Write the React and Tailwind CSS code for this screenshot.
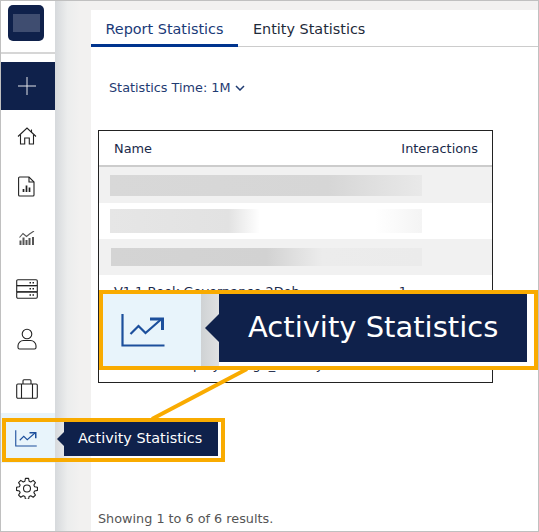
import React from "react";

const font = { fontFamily: '"DejaVu Sans", sans-serif' };

function TrendIcon({ className }) {
  return (
    <svg viewBox="0 0 44 33" fill="none" stroke="currentColor" strokeWidth="2.200" className={className}>
      <path d="M1.500 0v31.500h42" />
      <path d="M9.500 20l8-8 7 7 16-14" />
      <path d="M29 5h12.500v11" strokeWidth="3" />
    </svg>
  );
}

function HomeIcon() {
  return (
    <svg viewBox="0 0 20 18" fill="none" stroke="#222" strokeWidth="1.100" className="w-[20px] h-[18px]">
      <path d="M1 9.500L10 1l9 8.500" />
      <path d="M3.500 7.500v9.500h4.200v-6h4.600v6h4.200V7.500" />
      <path d="M14.500 2.500v3" />
    </svg>
  );
}

function DocIcon() {
  return (
    <svg viewBox="0 0 17 21" fill="none" stroke="#222" strokeWidth="1.100" className="w-[17px] h-[21px]">
      <path d="M1.600 1h9.400l5 5v13a1 1 0 0 1-1 1H1.600a1 1 0 0 1-1-1V2a1 1 0 0 1 1-1z" />
      <path d="M11 1v5h5" />
      <path d="M5.500 16v-3M8.500 16V9.500M11.500 16v-4.500" strokeWidth="1.700" />
    </svg>
  );
}

function ChartIcon() {
  return (
    <svg viewBox="0 0 16 14" fill="none" stroke="#555" className="w-[16px] h-[14px]">
      <path d="M0.500 6.500l3.500-4 3.500 3 3-2.500 4.500-3" strokeWidth="1.100" />
      <path d="M1.500 14V9.500M4.500 14V6.500M7.500 14V9M10.500 14V7M14 14V6" strokeWidth="2" />
    </svg>
  );
}

function ServerIcon() {
  return (
    <svg viewBox="0 0 22 20" fill="none" stroke="#222" strokeWidth="1.100" className="w-[22px] h-[20px]">
      <rect x="0.700" y="0.700" width="20.600" height="5.900" rx="1.200" />
      <rect x="0.700" y="6.600" width="20.600" height="6.300" />
      <rect x="0.700" y="12.900" width="20.600" height="6.300" rx="1.200" />
      <path d="M13.500 3.700h1.500M16.500 3.700h1.500M13.500 9.800h1.500M16.500 9.800h1.500M13.500 16h1.500M16.500 16h1.500" strokeWidth="1.500" />
    </svg>
  );
}

function UserIcon() {
  return (
    <svg viewBox="0 0 20 22" fill="none" stroke="#222" strokeWidth="1.100" className="w-[20px] h-[22px]">
      <circle cx="10" cy="6" r="4.800" />
      <path d="M6.500 12.500h7c3 0 5.500 2.300 5.500 5.300v1.700a1.500 1.500 0 0 1-1.500 1.500h-15a1.500 1.500 0 0 1-1.500-1.500v-1.700c0-3 2.500-5.300 5.500-5.300z" />
    </svg>
  );
}

function CaseIcon() {
  return (
    <svg viewBox="0 0 22 20" fill="none" stroke="#222" strokeWidth="1.100" className="w-[22px] h-[20px]">
      <rect x="0.700" y="5" width="20.600" height="14.300" rx="1.200" />
      <path d="M7 5V1.700a1 1 0 0 1 1-1h6a1 1 0 0 1 1 1V5" />
      <path d="M5.500 5v14.300M16.500 5v14.300" />
    </svg>
  );
}

function GearIcon() {
  return (
    <svg viewBox="0 0 24 24" fill="none" stroke="#222" strokeWidth="1.200" className="w-[22px] h-[22px]">
      <path d="M10.300 1.500h3.400l.6 3.100 1.800.8 2.700-1.700 2.400 2.400-1.700 2.700.8 1.800 3.100.6v3.400l-3.100.6-.8 1.800 1.700 2.700-2.400 2.400-2.700-1.700-1.800.8-.6 3.100h-3.400l-.6-3.100-1.800-.8-2.700 1.700-2.400-2.400 1.700-2.700-.8-1.800-3.100-.6v-3.400l3.100-.6.8-1.800-1.700-2.700 2.400-2.400 2.700 1.700 1.800-.8z" strokeLinejoin="round" />
      <circle cx="12" cy="12.600" r="3.800" />
    </svg>
  );
}

function Sidebar() {
  return (
    <div className="w-[54px] shrink-0 bg-white flex flex-col">
      <div className="h-[47px] border-b-2 border-[#d6d6d6] pt-[4px] pl-[7px] box-content">
        <div className="w-[36px] h-[36px] rounded-[5px] bg-[#0f214b] flex items-center justify-center">
          <div className="w-[27px] h-[18px] bg-[#3f4d70]" />
        </div>
      </div>
      <div className="mt-[8px] h-[48px] bg-[#0f214b] flex items-center justify-center pr-[2px]">
        <svg viewBox="0 0 18 18" stroke="#e3e5ea" strokeWidth="1" className="w-[18px] h-[18px]">
          <path d="M9 0v18M0 9h18" />
        </svg>
      </div>
      <div className="h-[51px] flex items-center justify-center pr-[3px]"><HomeIcon /></div>
      <div className="h-[51px] flex items-center justify-center pr-[3px]"><DocIcon /></div>
      <div className="h-[51px] flex items-center justify-center pr-[3px]"><ChartIcon /></div>
      <div className="h-[51px] flex items-center justify-center pr-[3px]"><ServerIcon /></div>
      <div className="h-[50px] flex items-center justify-center pr-[3px]"><UserIcon /></div>
      <div className="h-[49px] flex items-center justify-center pr-[3px]"><CaseIcon /></div>
      <div className="h-[50px] bg-[#e8f4fb] flex items-center justify-center pr-[5px] text-[#1c4f9c]">
        <TrendIcon className="w-[22px] h-[17px]" />
      </div>
      <div className="h-[50px] flex items-center justify-center pr-[3px]"><GearIcon /></div>
    </div>
  );
}

function Table() {
  return (
    <div className="ml-[7px] mt-[32px] w-[395px] h-[253px] border border-[#222] text-[12.900px] text-[#1a2a4a] overflow-hidden">
      <div className="h-[32px] pt-[2px] border-b-2 border-[#cccccc] flex items-center justify-between pl-[15px] pr-[14px] box-content">
        <span>Name</span>
        <span>Interactions</span>
      </div>
      <div className="h-[36px] bg-[#f1f1f1] flex items-center pl-[11px]">
        <div className="w-[312px] h-[21px] bg-gradient-to-r from-[#d8d8d8] via-[#d6d6d6] via-70% to-[#e9e9e9]" />
      </div>
      <div className="h-[36px] bg-white flex items-center pl-[11px]">
        <div className="w-[312px] h-[24px] bg-[linear-gradient(90deg,#e6e6e6_0%,#e2e2e2_38%,#ffffff_48%,#ffffff_85%,#f4f4f4_100%)]" />
      </div>
      <div className="h-[36px] bg-[#f1f1f1] flex items-center pl-[12px]">
        <div className="w-[311px] h-[18px] bg-[linear-gradient(90deg,#d4d4d4_0%,#d2d2d2_50%,#ececec_68%,#ebebeb_100%)]" />
      </div>
      <div className="h-[36px] flex items-center justify-between pl-[15px] pr-[85px] pb-[2px]">
        <span>V1.1 Book Governance 2Deb</span>
        <span>1</span>
      </div>
      <div className="h-[36px]" />
      <div className="h-[36px] flex items-center pl-[15px]">
        <span>V1.1 Set Display Design_Activity</span>
      </div>
    </div>
  );
}

function Main() {
  return (
    <div className="flex-1 min-w-0 mt-[9px] bg-white flex flex-col">
      <div className="h-[36px] border-b border-[#cccccc] box-content flex text-[14.400px] leading-[38px]">
        <div className="w-[147px] h-[37px] border-b-[3px] border-[#00348e] text-[#1a3a78] text-center">
          Report Statistics
        </div>
        <div className="pl-[15px] text-[#1e2a3a]">Entity Statistics</div>
      </div>
      <div className="mt-[31px] ml-[18px] h-[20px] flex items-center gap-[5px] text-[12.800px] text-[#1f3b72]">
        <span>Statistics Time: 1M</span>
        <svg viewBox="0 0 10 6" fill="none" stroke="#1f3b72" strokeWidth="1.500" className="w-[10px] h-[6px]">
          <path d="M1 1l4 4 4-4" />
        </svg>
      </div>
      <Table />
      <div className="mt-[126px] ml-[7px] text-[12.800px] text-[#555]">Showing 1 to 6 of 6 results.</div>
    </div>
  );
}

export default function App() {
  return (
    <div style={font} className="relative w-[539px] h-[532px] border border-[#c0c0c0] bg-[#f2f1f0] flex overflow-hidden">
      <Sidebar />
      <div className="w-[36px] shrink-0 bg-[linear-gradient(90deg,#d6d9dc_0%,#eceded_35%,#f2f1f0_70%)]" />
      <Main />

      {/* callout line between the small and the big highlight */}
      <svg className="absolute left-[0px] top-[0px] w-[539px] h-[532px] pointer-events-none" fill="none" stroke="#f9ab00" strokeWidth="4">
        <path d="M246 368L151 418" />
      </svg>

      {/* big highlight */}
      <div className="absolute left-[98px] top-[289px] w-[439px] h-[80px] border-4 border-[#f9ab00] bg-white flex">
        <div className="w-[98px] bg-[#e8f4fb] flex items-center pl-[18px] text-[#1c4f9c]">
          <TrendIcon className="w-[44px] h-[33px]" />
        </div>
        <div className="w-[18px] bg-[linear-gradient(90deg,#cfd2d4,#e0e1e2)]" />
        <div className="relative w-[308px] h-[68px] bg-[#0f214b] flex items-center pl-[29px] text-[29px] text-white whitespace-nowrap">
          <div className="absolute left-[-14px] top-[20px] w-0 h-0 border-y-[14px] border-y-transparent border-r-[14px] border-r-[#0f214b]" />
          Activity Statistics
        </div>
      </div>

      {/* small highlight, sidebar icon shows through */}
      <div className="absolute left-[1px] top-[417px] w-[223px] h-[44px] border-4 border-[#f9ab00] flex">
        <div className="w-[58px] h-[36px]" />
        <div className="relative w-[154px] h-[34px] bg-[#0f214b] flex items-center pl-[14px] text-[14.400px] text-white whitespace-nowrap">
          <div className="absolute left-[-7px] top-[10px] w-0 h-0 border-y-[7px] border-y-transparent border-r-[7px] border-r-[#0f214b]" />
          Activity Statistics
        </div>
      </div>
    </div>
  );
}
